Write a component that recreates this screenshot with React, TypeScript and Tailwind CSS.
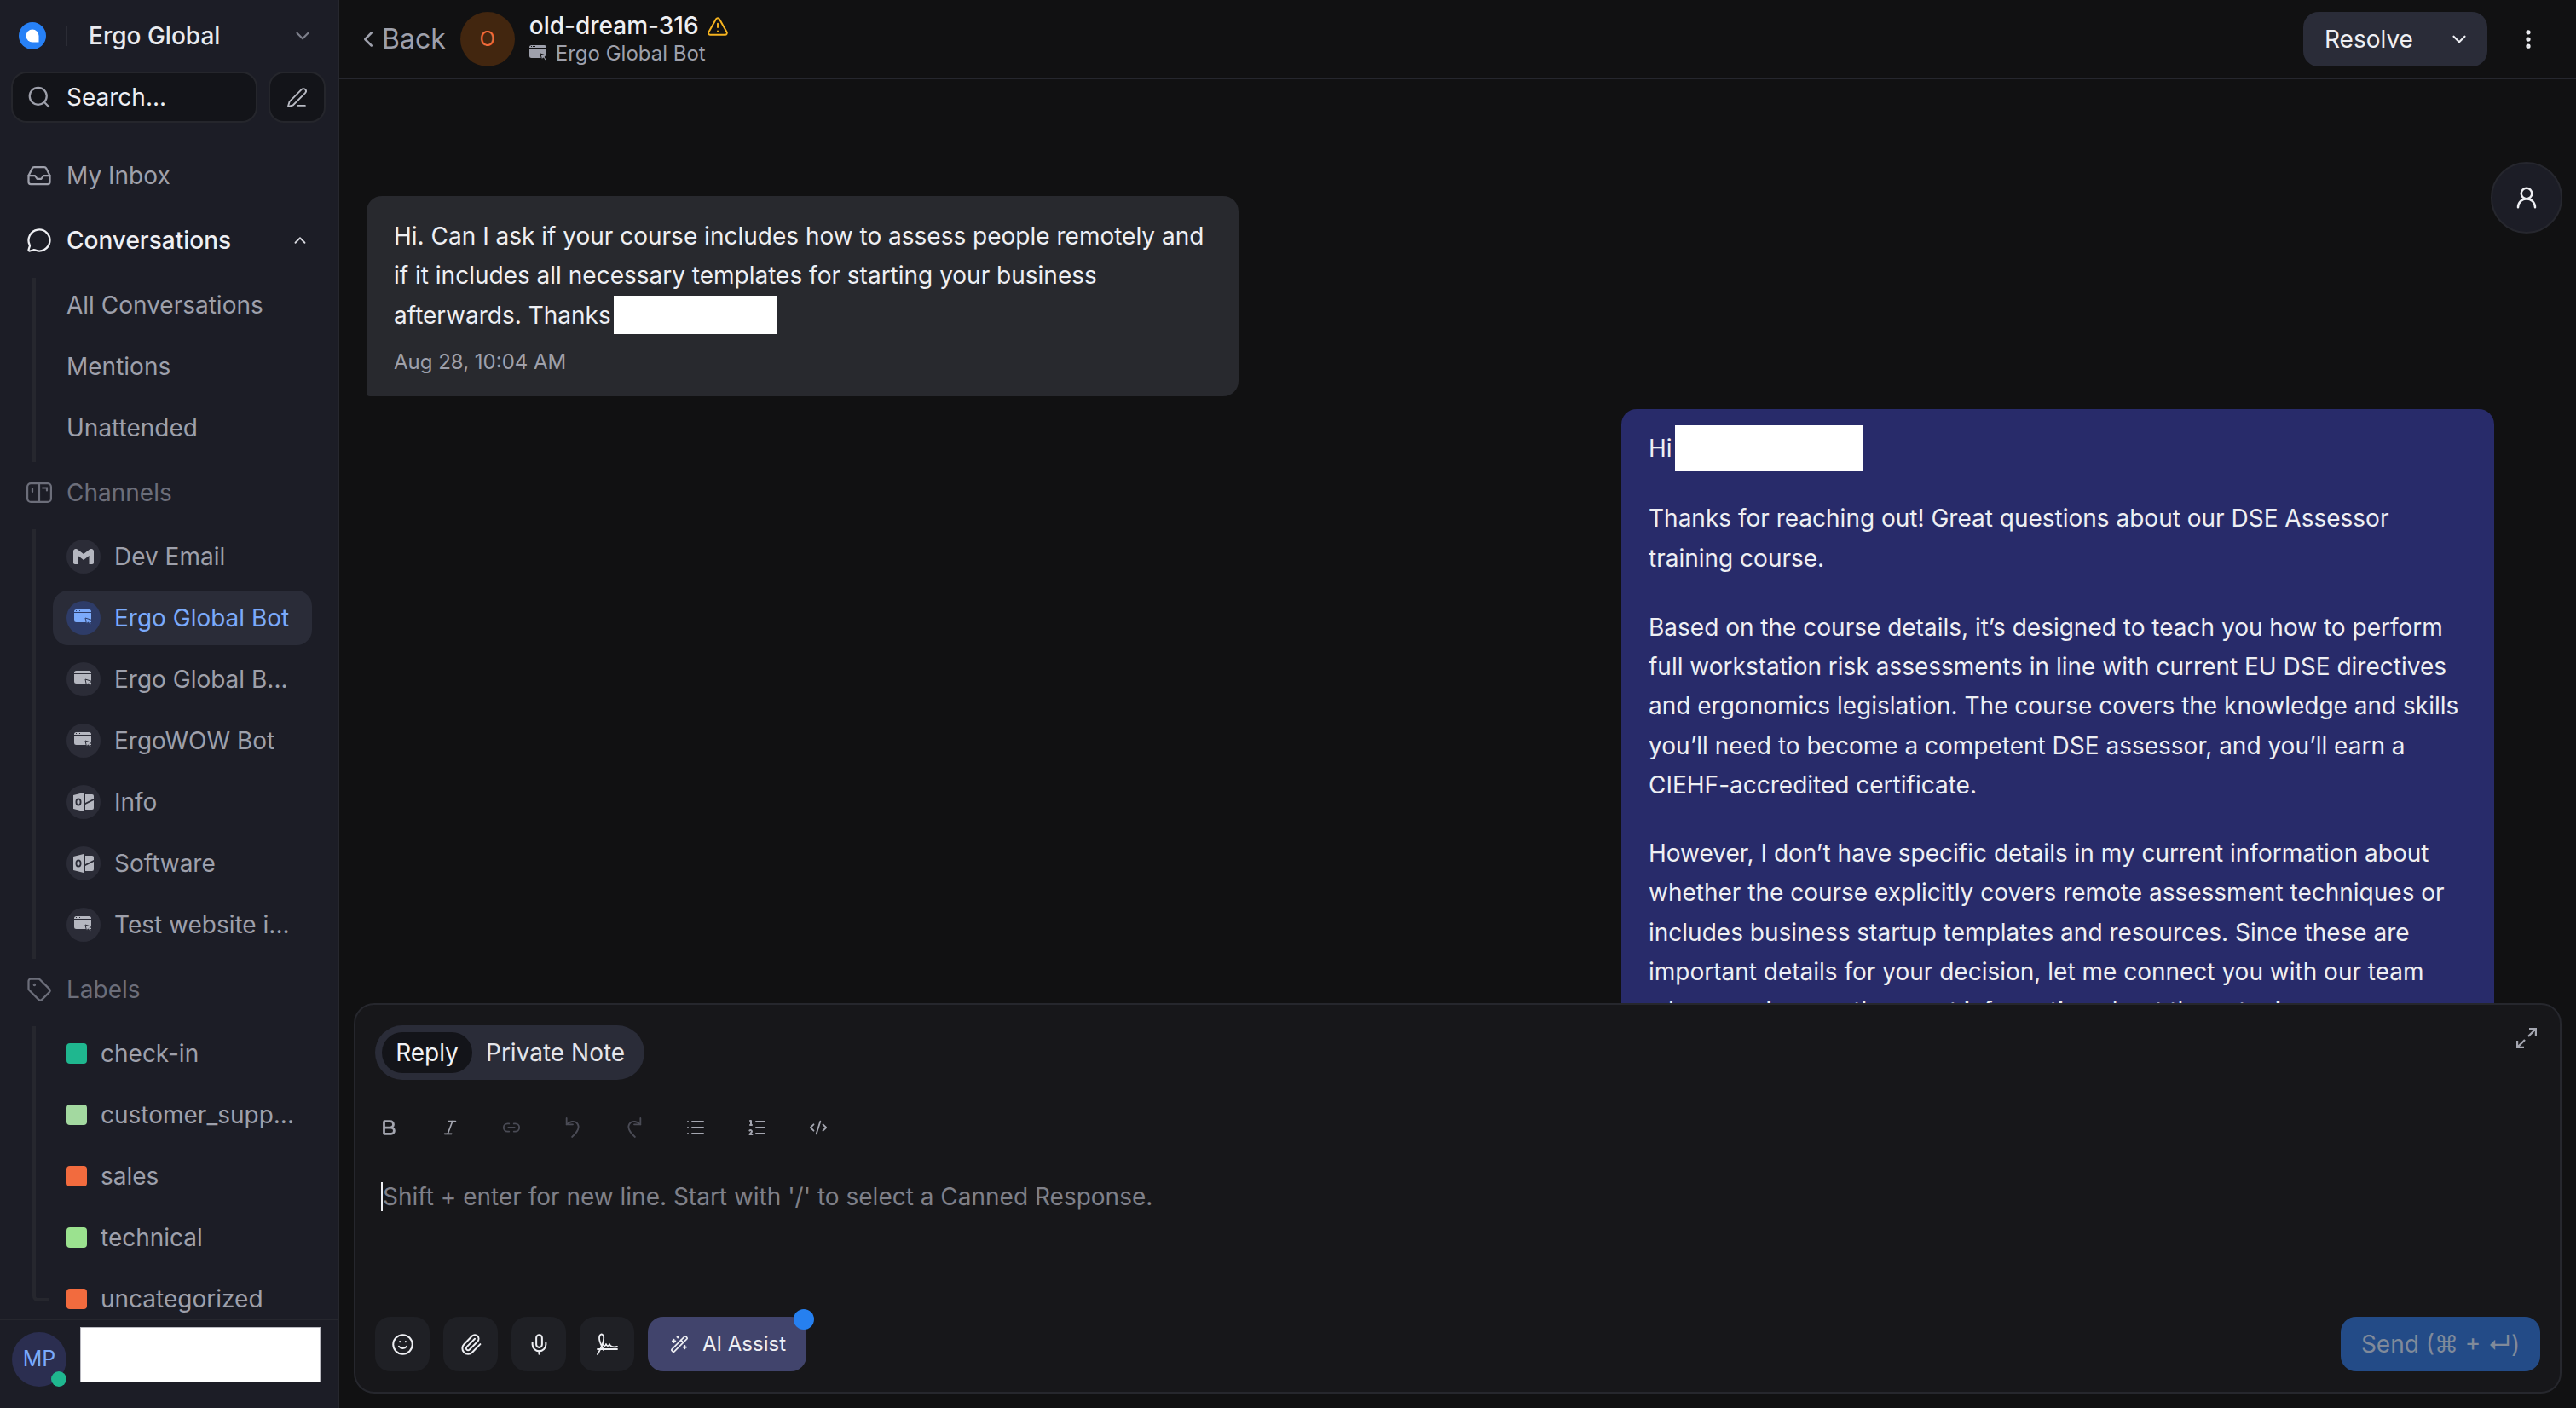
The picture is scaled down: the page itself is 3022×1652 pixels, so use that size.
import React from "react";
import {
  Bold, ChevronDown, ChevronLeft, ChevronUp, CodeXml, EllipsisVertical, Inbox, Italic, Link2, List, ListOrdered,
  MessageCircle, Mic, Paperclip, PenLine, Search, Smile, Tag, TriangleAlert, UserRound, WandSparkles,
} from "lucide-react";

function WebIcon({ className, bar }: { className?: string; bar: string }) {
  return (
    <svg viewBox="0 0 22 20" className={className} fill="currentColor">
      <path d="M2.5 0h15A2.5 2.5 0 0 1 20 2.5V15H2.5A2.5 2.5 0 0 1 0 12.5v-10A2.5 2.5 0 0 1 2.5 0z" />
      <rect x="0" y="3" width="20" height="1" fill={bar} />
      <rect x="2" y="1" width="1" height="1" fill={bar} />
      <rect x="4" y="1" width="1" height="1" fill={bar} />
      <rect x="6" y="1" width="1" height="1" fill={bar} />
      <path d="M13 10l8 2.5-3 1.3 2 3-1.5 1-2-3-2 2.2z" stroke={bar} strokeWidth="1" />
    </svg>
  );
}

function GmailIcon({ className }: { className?: string }) {
  return (
    <svg viewBox="0 0 24 18" className={className} fill="currentColor">
      <path d="M0 3a3 3 0 0 1 4.8-2.4L12 6l7.2-5.4A3 3 0 0 1 24 3v13a2 2 0 0 1-2 2h-3.500V8L12 13 5.500 8v10H2a2 2 0 0 1-2-2z" />
    </svg>
  );
}

function OutlookIcon({ className, bg }: { className?: string; bg: string }) {
  return (
    <svg viewBox="0 0 24 22" className={className} fill="currentColor">
      <path d="M0 3l12-3v22L0 19z" />
      <path d="M14 2h8a2 2 0 0 1 2 2v3l-10 5z" />
      <path d="M14 14l10-5v9a2 2 0 0 1-2 2h-8z" />
      <ellipse cx="6" cy="11" rx="2.600" ry="3.600" fill="none" stroke={bg} strokeWidth="1.800" />
    </svg>
  );
}

function ChannelsIcon({ className }: { className?: string }) {
  return (
    <svg viewBox="0 0 30 24" className={className} fill="none" stroke="currentColor" strokeWidth="2.200">
      <rect x="1.100" y="1.100" width="27.800" height="21.800" rx="4" />
      <path d="M15 1v22" />
      <path d="M7 7v4M19 6.500h5v3" strokeLinecap="round" />
    </svg>
  );
}

function ExpandIcon({ className }: { className?: string }) {
  return (
    <svg viewBox="0 0 24 24" className={className} fill="none" stroke="currentColor" strokeWidth="2.400">
      <path d="M14 10L23 1M15 1h8v8M10 14l-9 9M1 15v8h8" />
    </svg>
  );
}

function UndoIcon({ className, flip }: { className?: string; flip?: boolean }) {
  return (
    <svg viewBox="0 0 24 28" className={className} fill="none" stroke="currentColor" strokeWidth="2" strokeLinecap="round" strokeLinejoin="round">
      <g transform={flip ? "translate(24 0) scale(-1 1)" : undefined}>
        <path d="M4 2v8h8" />
        <path d="M4 10c4-4 10-5 13-2 5 5 1 12-6 18" />
      </g>
    </svg>
  );
}

function SignIcon({ className }: { className?: string }) {
  return (
    <svg viewBox="0 0 28 26" className={className} fill="none" stroke="currentColor" strokeWidth="1.800" strokeLinecap="round" strokeLinejoin="round">
      <path d="M3 25C8 17 11 8 10 4 9 0 5 1 5 6c0 5 3 9 5 14" />
      <path d="M9 13c2 3 3 3 4 0 1 3 3 3 4 0 1 3 4 4 9 3" />
      <path d="M3 19h23" />
    </svg>
  );
}

function NavRow({ icon, label, className, children }: { icon?: React.ReactNode; label: string; className: string; children?: React.ReactNode }) {
  return (
    <div className={`flex h-[72px] items-center ml-[31px] mr-[30px] ${className}`}>
      <span className="flex w-[47px] shrink-0 items-center">{icon}</span>
      <span className="flex-1 truncate">{label}</span>
      {children}
    </div>
  );
}

const channels = [
  { label: "Dev Email", kind: "mail" },
  { label: "Ergo Global Bot", kind: "web", active: true },
  { label: "Ergo Global B...", kind: "web" },
  { label: "ErgoWOW Bot", kind: "web" },
  { label: "Info", kind: "out" },
  { label: "Software", kind: "out" },
  { label: "Test website i...", kind: "web" },
];

const labels = [
  { label: "check-in", cls: "bg-[#1fb78f]" },
  { label: "customer_supp...", cls: "bg-[#a3d9a0]" },
  { label: "sales", cls: "bg-[#f26b3e]" },
  { label: "technical", cls: "bg-[#9be28f]" },
  { label: "uncategorized", cls: "bg-[#f26b3e]" },
];

function Sidebar() {
  return (
    <aside className="flex h-full w-[398px] shrink-0 flex-col border-r-2 border-[#26272e] bg-[#1c1d26]">
      <div className="flex h-[84px] shrink-0 items-center pl-[22px] pr-[28px]">
        <svg viewBox="0 0 32 32" className="h-[32px] w-[32px] shrink-0">
          <circle cx="16" cy="16" r="16" fill="#2781f6" />
          <path d="M16 8.500a7.500 7.500 0 0 1 7.500 7.500v7.500H16a7.500 7.500 0 0 1 0-15z" fill="#fff" />
        </svg>
        <span className="ml-[23px] h-[23px] w-[2px] bg-[#2b2c35]" />
        <span className="ml-[25px] flex-1 text-[28px] font-medium leading-none text-[#e9eaee]">Ergo Global</span>
        <ChevronDown className="h-[26px] w-[26px] text-[#7c7e8a]" strokeWidth={2} />
      </div>
      <div className="flex h-[60px] shrink-0 items-center gap-[13px] pl-[13px] pr-[14px]">
        <div className="flex h-[60px] w-[289px] items-center rounded-[18px] border-2 border-[#25262c] bg-[#131419] pl-[16px] text-[#eeeff3]">
          <Search className="mr-[17px] h-[30px] w-[30px] text-[#9ea0ab]" strokeWidth={1.800} />
          <span className="text-[28px] leading-none">Search...</span>
        </div>
        <div className="flex h-[60px] w-[67px] items-center justify-center rounded-[18px] border-2 border-[#25262c] bg-[#131419]">
          <PenLine className="h-[25px] w-[25px] text-[#b9bbc4]" strokeWidth={1.800} />
        </div>
      </div>
      <nav className="mt-[26px] flex-1 overflow-hidden text-[28px] text-[#9ea0ab]">
        <NavRow icon={<Inbox className="h-[30px] w-[30px]" strokeWidth={1.800} />} label="My Inbox" className="" />
        <NavRow
          icon={<MessageCircle className="h-[30px] w-[30px] text-[#eeeff3]" strokeWidth={1.800} />}
          label="Conversations"
          className="mt-1 font-medium text-[#eeeff3]"
        >
          <ChevronUp className="mr-[3px] h-[22px] w-[22px] text-[#d5d6dc]" strokeWidth={2} />
        </NavRow>
        <div className="ml-[38px] mt-2 flow-root h-[216px] border-l-4 border-[#26272e]">
          <div className="-mt-1 pl-[36px]">
            {["All Conversations", "Mentions", "Unattended"].map((t) => (
              <div key={t} className="flex h-[72px] items-center">{t}</div>
            ))}
          </div>
        </div>
        <NavRow icon={<ChannelsIcon className="h-[24px] w-[30px]" />} label="Channels" className="text-[#6c6e7a]" />
        <div className="ml-[38px] mt-[7px] flow-root h-[504px] border-l-4 border-[#26272e]">
          <div className="-mt-1 pl-[20px] pr-[30px]">
            {channels.map((c) => (
              <div key={c.label} className="flex h-[72px] items-center">
                <div className={`flex h-[64px] w-full items-center rounded-[18px] pl-[16px] pr-[8px] ${c.active ? "bg-[#2a2c38] text-[#7baafb]" : ""}`}>
                  <span className={`flex h-[40px] w-[40px] shrink-0 items-center justify-center rounded-full ${c.active ? "bg-[#2e3c68] text-[#7baafb]" : "bg-[#2b2c37] text-[#b5b7c0]"}`}>
                    {c.kind === "mail" && <GmailIcon className="h-[18px] w-[24px]" />}
                    {c.kind === "web" && <WebIcon className="h-[20px] w-[22px]" bar={c.active ? "#2e3c68" : "#2b2c37"} />}
                    {c.kind === "out" && <OutlookIcon className="h-[22px] w-[24px]" bg="#2b2c37" />}
                  </span>
                  <span className="ml-[16px] truncate">{c.label}</span>
                </div>
              </div>
            ))}
          </div>
        </div>
        <NavRow icon={<Tag className="h-[30px] w-[30px]" strokeWidth={1.800} />} label="Labels" className="text-[#6c6e7a]" />
        <div className="relative ml-[38px] mt-[7px] flow-root">
          <div className="absolute left-0 top-0 h-[323px] w-[20px] rounded-bl-[6px] border-b-4 border-l-4 border-[#26272e]" />
          <div className="-mt-1 pl-[40px]">
            {labels.map((l) => (
              <div key={l.label} className="flex h-[72px] items-center">
                <span className={`h-[24px] w-[24px] shrink-0 rounded-[4px] ${l.cls}`} />
                <span className="ml-[16px] truncate pr-[30px]">{l.label}</span>
              </div>
            ))}
          </div>
        </div>
      </nav>
      <div className="relative flex h-[105px] shrink-0 items-start border-t-2 border-[#26272e] pl-[14px] pt-[14px]">
        <div className="relative flex h-[64px] w-[64px] items-center justify-center rounded-full bg-[#2b2e50] text-[25px] text-[#7baafb]">
          MP
          <span className="absolute bottom-0 right-0 h-[18px] w-[18px] rounded-full bg-[#1fb78f]" />
        </div>
        <span className="ml-[66px] mt-[30px] text-[26px] leading-[30px] text-[#7c7e8a]">y@</span>
        <div className="absolute left-[94px] top-[8px] h-[65px] w-[282px] border border-[#b9b9c0] bg-white" />
      </div>
    </aside>
  );
}

function Header() {
  return (
    <header className="flex h-[93px] shrink-0 items-center border-b-2 border-[#26272e] pl-[20px] pr-[42px]">
      <ChevronLeft className="-ml-[1px] h-[30px] w-[30px] text-[#9ea0ab]" strokeWidth={2} />
      <span className="ml-[1px] text-[32px] leading-none text-[#9ea0ab]">Back</span>
      <div className="ml-[17px] flex h-[64px] w-[64px] items-center justify-center rounded-full bg-[#42260f] text-[24px] text-[#f06b3b]">O</div>
      <div className="ml-[17px] flex flex-col">
        <div className="flex items-center">
          <span className="text-[28px] font-medium leading-[35px] text-[#eeeff3]">old-dream-316</span>
          <TriangleAlert className="ml-[9px] h-[26px] w-[26px] text-[#f5b31f]" strokeWidth={1.800} />
        </div>
        <div className="flex items-center text-[#9ea0ab]">
          <WebIcon className="h-[20px] w-[22px]" bar="#111112" />
          <span className="ml-[9px] text-[24px] leading-[30px]">Ergo Global Bot</span>
        </div>
      </div>
      <div className="ml-auto flex h-[64px] w-[216px] items-center rounded-[18px] bg-[#2a2c38] pl-[25px] pr-[20px] text-[#eeeff3]">
        <span className="flex-1 text-[28px] leading-none">Resolve</span>
        <ChevronDown className="h-[26px] w-[26px]" strokeWidth={2} />
      </div>
      <EllipsisVertical className="ml-[34px] h-[28px] w-[28px] text-[#eeeff3]" strokeWidth={2.500} />
    </header>
  );
}

function Redact({ className }: { className: string }) {
  return <span className={`inline-block bg-white align-middle ${className}`} />;
}

function Messages() {
  return (
    <div className="relative min-h-0 flex-1 overflow-hidden pl-[32px] pr-[96px] pt-[137px] text-[28px] leading-[46.250px] text-[#eeeff3]">
      <div className="w-[1023px] rounded-[18px] rounded-bl-[4px] bg-[#28292e] px-[32px] pb-[21px] pt-[24px]">
        <p>Hi. Can I ask if your course includes how to assess people remotely and if it includes all necessary templates for starting your business afterwards. Thanks<Redact className="ml-[3px] h-[45px] w-[192px] -translate-y-[2px]" /></p>
        <p className="mt-[12px] text-[24px] leading-[38px] text-[#9ea0ab]">Aug 28, 10:04 AM</p>
      </div>
      <div className="ml-auto mt-[15px] w-[1024px] rounded-t-[18px] bg-[#282b6a] px-[32px] pt-[19px]">
        <p className="flex items-center">Hi<Redact className="ml-[3px] h-[54px] w-[220px]" /></p>
        <p className="mt-[32px]">Thanks for reaching out! Great questions about our DSE Assessor training course.</p>
        <p className="mt-[35px]">Based on the course details, it’s designed to teach you how to perform full workstation risk assessments in line with current EU DSE directives and ergonomics legislation. The course covers the knowledge and skills you’ll need to become a competent DSE assessor, and you’ll earn a CIEHF-accredited certificate.</p>
        <p className="mt-[34px]">However, I don’t have specific details in my current information about whether the course explicitly covers remote assessment techniques or includes business startup templates and resources. Since these are important details for your decision, let me connect you with our team who can give you the exact information about these topics.</p>
      </div>
      <div className="absolute right-[16px] top-[97px] flex h-[84px] w-[84px] items-center justify-center rounded-full border-2 border-[#26272e] bg-[#1c1d26]">
        <UserRound className="h-[30px] w-[30px] text-[#eeeff3]" strokeWidth={2} />
      </div>
    </div>
  );
}

function Composer() {
  const lit = "text-[#a4a6b0]";
  const dim = "text-[#4a4b55]";
  const tool = "flex w-[72px] items-center justify-center -translate-x-[20px]";
  return (
    <div className="relative mx-[17px] mb-[17px] flex h-[458px] shrink-0 flex-col rounded-[24px] border-2 border-[#26272d] bg-[#17171a] px-[23px] pt-[24px]">
      <div className="flex h-[64px] w-[316px] items-center rounded-full bg-[#2a2c38] pl-[8px] text-[28px] leading-none">
        <span className="flex h-[48px] w-[106px] items-center justify-center rounded-full bg-[#131419] text-[#f2f3f6]">Reply</span>
        <span className="ml-[16px] text-[#e4e5ea]">Private Note</span>
      </div>
      <ExpandIcon className="absolute right-[27px] top-[27px] h-[24px] w-[24px] text-[#a4a6b0]" />
      <div className="mt-[24px] flex h-[64px] items-center">
        <span className={tool}><Bold className={`h-[22px] w-[22px] ${lit}`} strokeWidth={3} /></span>
        <span className={tool}><Italic className={`h-[22px] w-[22px] ${lit}`} strokeWidth={1.800} /></span>
        <span className={tool}><Link2 className={`h-[22px] w-[22px] ${dim}`} strokeWidth={2} /></span>
        <span className={tool}><UndoIcon className={`h-[26px] w-[22px] ${dim}`} /></span>
        <span className={tool}><UndoIcon flip className={`h-[26px] w-[22px] ${dim}`} /></span>
        <span className={tool}><List className={`h-[24px] w-[24px] ${lit}`} strokeWidth={2} /></span>
        <span className={tool}><ListOrdered className={`h-[24px] w-[24px] ${lit}`} strokeWidth={2} /></span>
        <span className={tool}><CodeXml className={`h-[22px] w-[22px] ${lit}`} strokeWidth={2} /></span>
      </div>
      <div className="mt-[31px] flex h-[36px] items-center pl-[7px]">
        <span className="h-[34px] w-[2px] bg-[#eeeff3]" />
        <span className="text-[28px] leading-none text-[#7f8089]">Shift + enter for new line. Start with '/' to select a Canned Response.</span>
      </div>
      <div className="mt-auto mb-[24px] flex items-center gap-[16px]">
        <span className="flex h-[64px] w-[64px] items-center justify-center rounded-[18px] bg-[#1f2025]"><Smile className="h-[27px] w-[27px] text-[#eeeff3]" strokeWidth={1.800} /></span>
        <span className="flex h-[64px] w-[64px] items-center justify-center rounded-[18px] bg-[#1f2025]"><Paperclip className="h-[27px] w-[27px] text-[#eeeff3]" strokeWidth={1.800} /></span>
        <span className="flex h-[64px] w-[64px] items-center justify-center rounded-[18px] bg-[#1f2025]"><Mic className="h-[27px] w-[27px] text-[#eeeff3]" strokeWidth={1.800} /></span>
        <span className="flex h-[64px] w-[64px] items-center justify-center rounded-[18px] bg-[#1f2025]"><SignIcon className="h-[26px] w-[28px] text-[#eeeff3]" /></span>
        <div className="relative flex h-[64px] w-[186px] items-center rounded-[18px] bg-[#41446c] pl-[26px]">
          <WandSparkles className="h-[22px] w-[22px] text-[#eeeff3]" strokeWidth={1.800} />
          <span className="ml-[16px] text-[24px] leading-none text-[#eeeff3]">AI Assist</span>
          <span className="absolute -right-[9px] -top-[9px] h-[24px] w-[24px] rounded-full bg-[#2680f0]" />
        </div>
        <div className="ml-auto flex h-[64px] w-[234px] items-center justify-center rounded-[18px] bg-[#234b87] text-[28px] leading-none text-[#808a9a]">
          Send (⌘ + ↵)
        </div>
      </div>
    </div>
  );
}

export default function App() {
  return (
    <div className="flex h-[1652px] w-[3022px] overflow-hidden bg-[#111112] font-[Inter,sans-serif]">
      <Sidebar />
      <main className="flex h-full min-w-0 flex-1 flex-col">
        <Header />
        <Messages />
        <Composer />
      </main>
    </div>
  );
}
